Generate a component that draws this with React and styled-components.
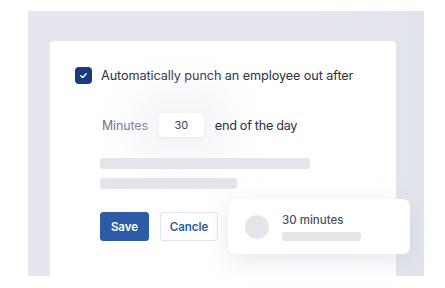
import React from 'react'
import styled, { createGlobalStyle } from 'styled-components'

const GlobalStyle = createGlobalStyle`
  body {
    margin: 0;
    background: #ffffff;
    font-family: 'Inter', 'Noto Sans', sans-serif;
  }
`

const Page = styled.div`
  width: 445px;
  height: 288px;
  padding: 11px 21px 12px 28px;
  box-sizing: border-box;
`

const Panel = styled.div`
  position: relative;
  height: 265px;
  background: linear-gradient(90deg, #e6e7ee 0%, #e6e7ee 70%, #e2e4ec 100%);
  padding: 30px 28px 0 22px;
  box-sizing: border-box;
  display: flex;
`

const Card = styled.div`
  flex: 1;
  background: #ffffff;
  border-radius: 4px 4px 0 0;
  padding: 26px 0 0 25px;
  box-sizing: border-box;
`

const CheckRow = styled.div`
  display: flex;
  align-items: center;
  gap: 9px;
`

const CheckBox = styled.span`
  width: 17px;
  height: 17px;
  border-radius: 4px;
  background: #173c7e;
  display: flex;
  align-items: center;
  justify-content: center;
`

const Label = styled.span`
  font-size: 12.7px;
  color: #2d3142;
  letter-spacing: -0.1px;
`

const Indent = styled.div`
  padding-left: 25px;
`

const MinutesRow = styled.div`
  display: flex;
  align-items: center;
  margin-top: 29px;
  height: 24px;
`

const Muted = styled.span`
  font-size: 12.4px;
  color: #6e7282;
  margin-left: 2px;
  letter-spacing: -0.1px;
`

const NumberBox = styled.span`
  width: 45px;
  height: 24px;
  margin: 0 11px;
  border-radius: 4px;
  background: #ffffff;
  box-shadow: 0 0 44px 22px rgba(222, 224, 234, 0.4), 0 1px 3px rgba(200, 204, 216, 0.35);
  display: flex;
  align-items: center;
  justify-content: center;
  font-size: 11px;
  color: #3b3f4e;
`

const DayLabel = styled(Label)`
  letter-spacing: -0.3px;
`

const Bars = styled.div`
  display: flex;
  flex-direction: column;
  gap: 9px;
  margin-top: 21px;
`

const Bar = styled.div`
  width: ${p => p.w}px;
  height: ${p => p.h || 11}px;
  border-radius: 3px;
  background: #e4e5ea;
`

const Actions = styled.div`
  display: flex;
  gap: 11px;
  margin-top: 23px;
`

const Button = styled.button`
  height: 29px;
  padding: 0;
  width: ${p => p.w}px;
  border-radius: 3px;
  font-family: inherit;
  font-size: 11.5px;
  font-weight: 600;
  cursor: pointer;
  border: 1px solid ${p => (p.primary ? '#2d5ca6' : '#e1e4ec')};
  background: ${p => (p.primary ? '#2d5ca6' : '#ffffff')};
  color: ${p => (p.primary ? '#ffffff' : '#2d5ca6')};
`

const Toast = styled.div`
  position: absolute;
  left: 200px;
  top: 188px;
  width: 182px;
  height: 55px;
  background: #ffffff;
  border-radius: 7px;
  box-shadow: 0 6px 24px rgba(180, 186, 205, 0.35);
  display: flex;
  align-items: center;
  padding-left: 17px;
  box-sizing: border-box;
  gap: 13px;
`

const Avatar = styled.span`
  width: 24px;
  height: 24px;
  border-radius: 50%;
  background: #e4e5ea;
`

const ToastText = styled.div`
  display: flex;
  flex-direction: column;
  gap: 5px;
  margin-top: 1px;
`

const ToastTitle = styled.span`
  font-size: 11.5px;
  font-weight: 500;
  color: #4a4f5e;
`

export default function App() {
  return (
    <Page>
      <GlobalStyle />
      <Panel>
        <Card>
          <CheckRow>
            <CheckBox>
              <svg width="9" height="9" viewBox="0 0 10 10">
                <path d="M2 5.2 L4.2 7.2 L8 3" fill="none" stroke="#ffffff" strokeWidth="1.6" strokeLinecap="round" strokeLinejoin="round" />
              </svg>
            </CheckBox>
            <Label>Automatically punch an employee out after</Label>
          </CheckRow>
          <Indent>
            <MinutesRow>
              <Muted>Minutes</Muted>
              <NumberBox>30</NumberBox>
              <DayLabel>end of the day</DayLabel>
            </MinutesRow>
            <Bars>
              <Bar w={210} />
              <Bar w={137} />
            </Bars>
            <Actions>
              <Button primary w={49}>Save</Button>
              <Button w={58}>Cancle</Button>
            </Actions>
          </Indent>
        </Card>
        <Toast>
          <Avatar />
          <ToastText>
            <ToastTitle>30 minutes</ToastTitle>
            <Bar w={79} h={9} />
          </ToastText>
        </Toast>
      </Panel>
    </Page>
  )
}
